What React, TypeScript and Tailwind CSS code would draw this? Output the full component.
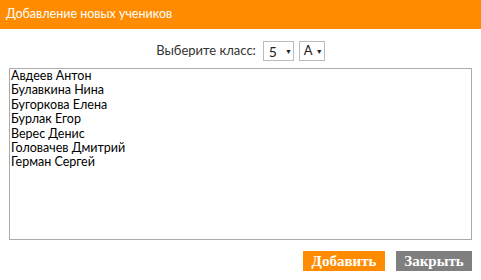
import React from "react";

const students = [
  "Авдеев Антон",
  "Булавкина Нина",
  "Бугоркова Елена",
  "Бурлак Егор",
  "Верес Денис",
  "Головачев Дмитрий",
  "Герман Сергей",
];

export default function App() {
  return (
    <div className="w-[481px] h-[280px] bg-white flex flex-col" style={{ fontFamily: 'Lato, "Noto Sans", sans-serif' }}>
      <div className="h-[29px] bg-[#ff8c00] flex items-center pl-[6px] text-white text-[12.5px]">
        Добавление новых учеников
      </div>
      <div className="flex items-center justify-center gap-[5px] mt-[12px] h-[20px] text-[13px] text-[#333]">
        <span className="mr-[2px]">Выберите класс:</span>
        <div className="w-[31px] h-[20px] border border-[#bbb] flex items-center pl-[5px] text-[14px] text-[#222]">
          <span>5</span>
          <span className="ml-[8px] text-[7px]">▼</span>
        </div>
        <div className="w-[26px] h-[20px] border border-[#bbb] flex items-center pl-[4px] text-[13px] text-[#222]">
          <span>А</span>
          <span className="ml-[3px] text-[7px]">▼</span>
        </div>
      </div>
      <div className="mx-[9px] mt-[7px] h-[172px] border border-[#aaa] px-[1px] text-[12.5px] leading-[14.4px] text-black">
        {students.map((s) => (
          <div key={s}>{s}</div>
        ))}
      </div>
      <div className="flex justify-end gap-[11px] mt-[11px] mr-[9px]">
        <button className="w-[82px] h-[20px] bg-[#ff8c00] text-white text-[15px] font-bold flex items-center justify-center" style={{ fontFamily: '"Liberation Serif", serif' }}>
          Добавить
        </button>
        <button className="w-[76px] h-[20px] bg-[#7f7f7f] text-white text-[15px] font-bold flex items-center justify-center" style={{ fontFamily: '"Liberation Serif", serif' }}>
          Закрыть
        </button>
      </div>
    </div>
  );
}
